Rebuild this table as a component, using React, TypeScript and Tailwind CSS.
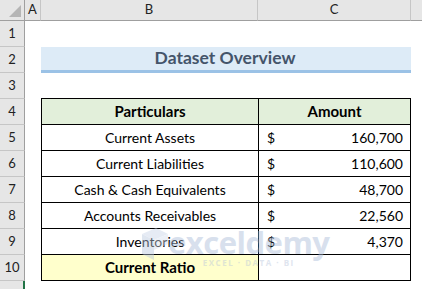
import React from "react";

const font = { fontFamily: "Lato, 'Noto Sans', sans-serif" };

const rows = [
  { name: "Current Assets", amt: "160,700" },
  { name: "Current Liabilities", amt: "110,600" },
  { name: "Cash & Cash Equivalents", amt: "48,700" },
  { name: "Accounts Receivables", amt: "22,560" },
  { name: "Inventories", amt: "4,370" },
];

export default function App() {
  const rowNums = [1, 2, 3, 4, 5, 6, 7, 8, 9, 10];
  return (
    <div
      className="relative w-[422px] h-[289px] overflow-hidden bg-white text-[14px] text-black"
      style={font}
    >
      <div className="grid grid-cols-[25px_16px_217px_153px_11px] grid-rows-[21px_repeat(10,26px)_8px]">
        {/* header row */}
        <div className="bg-[#e6e6e6] border-r border-b border-[#9f9f9f] relative">
          <svg className="absolute right-[3px] bottom-[3px]" width="12" height="12" viewBox="0 0 12 12">
            <polygon points="12,0 12,12 0,12" fill="#b5b5b5" />
          </svg>
        </div>
        <div className="bg-[#e6e6e6] border-r border-b border-[#9f9f9f] border-r-[#c6c6c6] flex items-center justify-center text-[13px] text-[#222]">A</div>
        <div className="bg-[#e6e6e6] border-r border-b border-[#9f9f9f] border-r-[#c6c6c6] flex items-center justify-center text-[13px] text-[#222]">B</div>
        <div className="bg-[#e6e6e6] border-r border-b border-[#9f9f9f] border-r-[#c6c6c6] flex items-center justify-center text-[13px] text-[#222]">C</div>
        <div className="bg-[#e6e6e6] border-b border-[#9f9f9f]"></div>

        {rowNums.map((n) => (
          <div
            key={n}
            className="bg-[#e6e6e6] border-r border-b border-r-[#9f9f9f] border-b-[#c6c6c6] flex items-center justify-center text-[13px] text-[#222]"
            style={{ gridColumn: 1, gridRow: n + 1 }}
          >
            {n}
          </div>
        ))}
        <div className="bg-[#e6e6e6] border-r-2 border-r-[#217346]" style={{ gridColumn: 1, gridRow: 12 }}></div>

        {/* title */}
        <div
          className="bg-[#ddebf7] border-b-[3px] border-[#9bc2e6] flex items-center justify-center font-bold text-[17.5px] text-[#44546a]"
          style={{ gridColumn: "3 / span 2", gridRow: 3 }}
        >
          <span className="mr-[2px]">Dataset Overview</span>
        </div>

        {/* table */}
        <div
          className="border-l border-t border-black grid grid-cols-[217px_152px] grid-rows-[repeat(7,26px)]"
          style={{ gridColumn: "3 / span 2", gridRow: "5 / span 7", marginTop: "-1px" }}
        >
          <div className="bg-[#e2efda] border-r border-b border-black flex items-center justify-center font-bold text-[15px]">Particulars</div>
          <div className="bg-[#e2efda] border-r border-b border-black flex items-center justify-center font-bold text-[15px]">Amount</div>
          {rows.map((r) => (
            <React.Fragment key={r.name}>
              <div className="border-r border-b border-black flex items-center justify-center">{r.name}</div>
              <div className="border-r border-b border-black flex items-center justify-between pl-[8px] pr-[7px]">
                <span>$</span>
                <span>{r.amt}</span>
              </div>
            </React.Fragment>
          ))}
          <div className="bg-[#ffffcc] border-r border-b border-black flex items-center justify-center font-bold text-[15px]">Current Ratio</div>
          <div className="border-r border-b border-black"></div>
        </div>
      </div>

      {/* watermark */}
      <div className="absolute left-[140px] top-[226px] flex items-start opacity-45 pointer-events-none">
        <svg width="30" height="36" viewBox="0 0 30 36">
          <polygon points="2,8 16,2 28,8 14,14" fill="#c9d5e8" />
          <polygon points="2,8 14,14 14,34 2,28" fill="#b9c8df" />
          <polygon points="14,14 28,8 28,18 14,24" fill="#d6e0ee" />
        </svg>
        <div className="flex flex-col items-center -ml-[2px]">
          <span className="text-[31px] leading-[32px] font-bold text-[#a9bbd8] tracking-[-0.5px]" style={{ fontFamily: "'Open Sans', sans-serif" }}>
            exceldemy
          </span>
          <span className="text-[8px] leading-[9px] font-bold text-[#b9c6dc] tracking-[1.5px]" style={{ fontFamily: "'Open Sans', sans-serif" }}>
            EXCEL · DATA · BI
          </span>
        </div>
      </div>
    </div>
  );
}
